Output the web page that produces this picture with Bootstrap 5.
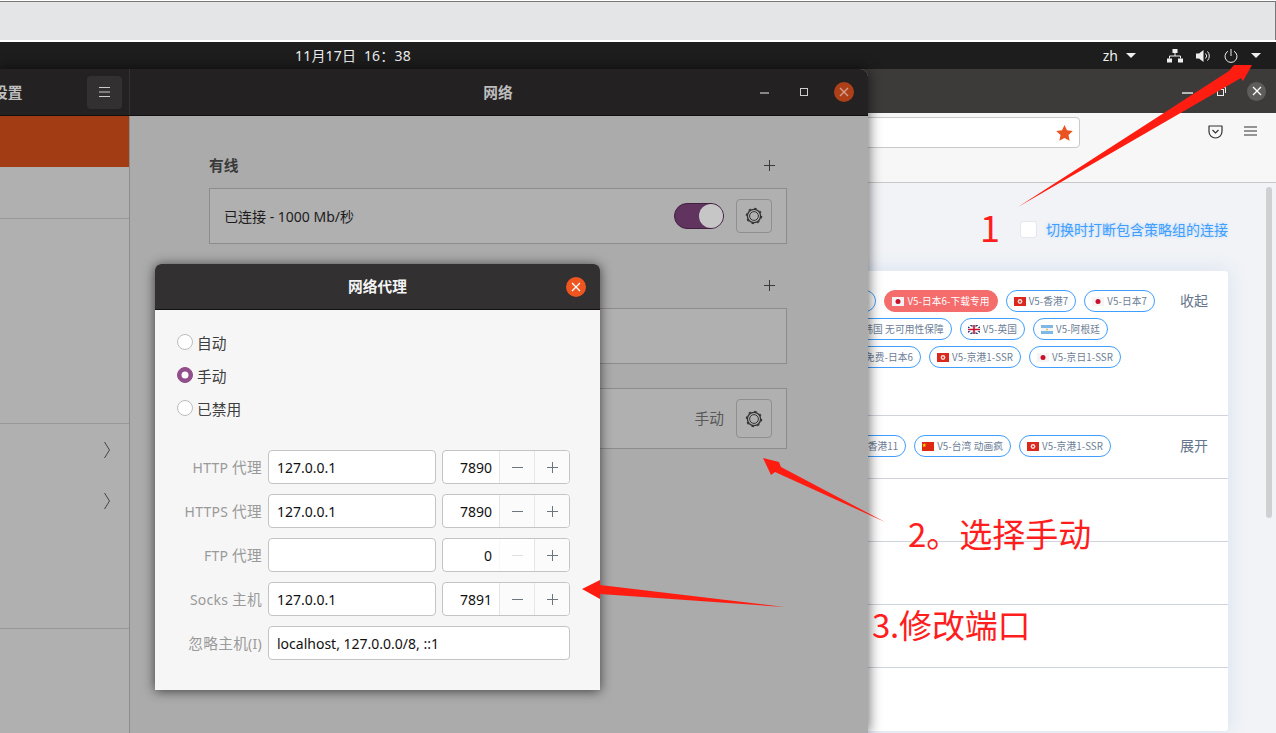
<!DOCTYPE html>
<html lang="zh">
<head>
    <meta charset="UTF-8">
    <meta name="viewport" content="width=device-width, initial-scale=1.0">
    <title>网络代理</title>
    <link rel="stylesheet" href="https://cdn.jsdelivr.net/npm/bootstrap@5.3.0/dist/css/bootstrap.min.css">
    <script src="https://cdn.jsdelivr.net/npm/bootstrap@5.3.0/dist/js/bootstrap.bundle.min.js"></script>
    <style>
        html, body { height: 100%; }
        body { margin: 0; background: #fff; overflow: hidden; font-family: "Noto Sans", "Noto Sans CJK SC", sans-serif; font-size: 14px; }
        .zh { font-size: 14.7px; }
        .desk { position: relative; width: 1276px; height: 733px; overflow: hidden; background: #fff; padding-top: 1px; }

        .top-strip { height: 39px; background: #e4e5e7; border-top: 1px solid #777; border-right: 1px solid #777; margin-bottom: 2px; }
        .top-bar { height: 27px; background: #1d1d1d; color: #eee; }
        .clock { margin-left: 295px; letter-spacing: .2px; white-space: pre; }
        .lang { margin-right: 31px; }
        .lang-caret { width: 0; height: 0; border-left: 5px solid transparent; border-right: 5px solid transparent; border-top: 5px solid #eee; }
        .tray { gap: 13px; margin-right: 15px; }

        /* settings window */
        .win-settings { position: absolute; left: 0; top: 69px; width: 868px; height: 664px; border-top-right-radius: 8px; background: #ababab; box-shadow: 0 0 14px rgba(0, 0, 0, .65); z-index: 2; }
        .set-head { height: 47px; background: #232121; border-top-right-radius: 8px; border-bottom: 1px solid #111; color: #bdbdbd; font-weight: 700; }
        .head-left { width: 130px; border-right: 1px solid #343232; overflow: hidden; padding-right: 7px; }
        .head-left-title { margin-left: -7px; white-space: nowrap; font-size: 14.7px; }
        .menu-btn { width: 35px; height: 33px; background: #323030; border-radius: 4px; margin-left: auto; }
        .head-title { margin-left: 353px; width: 30px; text-align: center; font-size: 14.7px; white-space: nowrap; }
        .win-ctl { margin-left: auto; margin-right: 14px; gap: 20px; }
        .win-ctl > span { width: 20px; height: 20px; }
        .ctl-close { background: #ad4018; border-radius: 50%; }
        .side { width: 130px; height: 617px; background: #b0b0b0; border-right: 1px solid #8c8c8c; }
        .side-on { height: 51px; background: #a23c14; }
        .side-a { height: 52px; border-bottom: 1px solid #999; }
        .side-b { height: 205px; border-bottom: 1px solid #999; padding-top: 0; }
        .chev { height: 51px; padding-right: 19px; }
        .pane { width: 738px; padding: 37px 0 0 79px; color: #1c1c1c; }
        .sec-head { width: 578px; height: 24px; margin-bottom: 11px; font-weight: 700; color: #3a3a3a; }
        .sec-plus { margin-right: 12px; }
        .sec-box { width: 578px; height: 56px; background: #b0b0b0; border: 1px solid #8c8c8c; padding: 0 14px; margin-bottom: 29px; }
        .sec-box.tall { height: 61px; margin-top: -5px; color: #585858; }
        .toggle { position: relative; width: 50px; height: 26px; border-radius: 13px; background: #60345f; border: 1px solid #3f2040; margin-right: 12px; }
        .toggle-knob { position: absolute; right: 0; top: 0; width: 24px; height: 24px; border-radius: 50%; background: #c6c6c6; }
        .gear-btn { width: 36px; height: 34px; border: 1px solid #8f8f8f; border-radius: 4px; background: #b0b0b0; }
        .tall .gear-btn { height: 39px; margin-left: 12px; }

        /* proxy dialog */
        .dlg { position: absolute; left: 155px; top: 264px; width: 445px; height: 426px; border-radius: 6px 6px 0 0; background: #f6f6f6; box-shadow: 0 1px 12px rgba(0, 0, 0, .65); z-index: 3; }
        .dlg-head { height: 46px; background: #323030; border-radius: 6px 6px 0 0; border-bottom: 1px solid #111; color: #f4f4f4; font-weight: 700; position: relative; }
        .dlg-close { position: absolute; right: 14px; top: 13px; width: 20px; height: 20px; background: #ee5520; border-radius: 50%; }
        .dlg-body { padding: 17px 30px 0 22px; color: #3d3d3d; }
        .radio-row { height: 33px; gap: 4px; margin: 0; }
        .radio-row .form-check-input { width: 16px; height: 16px; margin: 0 0 4px; background-color: #fff; border: 1px solid #bdbdbd; box-shadow: none; }
        .radio-row .form-check-input:checked { background-color: #924d8b; border-color: #924d8b; }
        .proxy-grid { display: grid; grid-template-columns: 85px 168px 128px; gap: 10px 6px; margin-top: 24px; align-items: center; }
        .proxy-label { text-align: right; color: #9a9a9a; white-space: nowrap; letter-spacing: .25px; }
        .proxy-input { height: 34px; padding: 0 8px; font-size: 14px; color: #111; border: 1px solid #c4c4c4; border-radius: 4px; box-shadow: none; background: #fff; }
        .proxy-span { grid-column: 2 / 4; }
        .spin { height: 34px; border: 1px solid #c4c4c4; border-radius: 4px; background: #fff; overflow: hidden; color: #111; }
        .spin-num { width: 56px; text-align: right; padding-right: 7px; }
        .spin-btn { flex: 1; border-left: 1px solid #e6e6e6; background: #fbfbfb; height: 100%; }

        /* browser */
        .win-browser { position: absolute; left: 500px; top: 69px; width: 776px; height: 664px; background: #f1f3f6; z-index: 1; }
        .br-title { height: 44px; background: #3d3b39; }
        .br-ctl { width: 100%; height: 100%; padding-right: 10px; gap: 24px; }
        .br-close { width: 19px; height: 19px; border-radius: 50%; background: #5f5d5b; margin-left: -3px; }
        .br-tools { height: 70px; background: #f7f7f8; border-bottom: 1px solid #c8c8c8; padding: 4px 17px 0 0; }
        .url-bar { width: 580px; height: 31px; background: #fff; border: 1px solid #c9c9c9; border-radius: 4px; padding-right: 6px; margin-right: 128px; }
        .pocket { margin-right: 21px; }
        .br-main { position: relative; padding: 37px 48px 0 0; }
        .scroll-thumb { position: absolute; right: 4px; top: 4px; width: 6px; height: 331px; border-radius: 3px; background: #d0d0d0; }
        .opt-line { gap: 9px; height: 18px; margin-bottom: 33px; color: #409eff; text-shadow: 0 0 3px rgba(64, 158, 255, .35); white-space: nowrap; }
        .opt-check { width: 17px; height: 17px; background: #fff; border: 1px solid #e4e7ed; border-radius: 3px; }
        .node-card { width: 728px; border: 0; border-radius: 4px; box-shadow: 0 0 20px rgba(90, 140, 230, .16); }
        .node-row { background: #fff; border-color: #d0d3da; padding: 0; height: 63px; }
        .node-row.first { height: 145px; }
        .node-inner { padding: 19px 20px 0 0; color: #65758c; }
        .tag-col { gap: 6px; flex: 1; min-width: 0; }
        .tag-line { gap: 8px; justify-content: flex-end; }
        .end-47 { padding-right: 47px; }
        .end-34 { padding-right: 34px; }
        .end-44 { padding-right: 44px; }
        .tag { height: 22px; padding: 0 7px; border: 1px solid #409eff; border-radius: 11px; background: #fff; color: #6b7d96; font-family: "Noto Sans CJK SC", sans-serif; font-size: 9.7px; letter-spacing: .1px; gap: 3px; white-space: nowrap; }
        .tag.on { background: #f56c6c; border-color: #f56c6c; color: #fff; }
        .flag { width: 12px; height: 9px; flex: none; }
        .act { width: 28px; margin-left: 25px; line-height: 22px; font-size: 14px; white-space: nowrap; }

        /* annotations */
        .notes { position: absolute; left: 0; top: 0; z-index: 4; pointer-events: none; }
        .note { position: absolute; z-index: 5; color: #ff1d1d; font-family: "Noto Sans CJK SC", sans-serif; font-weight: 400; font-size: 33px; line-height: 1; white-space: nowrap; }
        .note-1 { left: 980px; top: 208px; font-size: 36px; }
        .note-2 { left: 908px; top: 517px; }
        .note-3 { left: 872px; top: 608px; letter-spacing: -.2px; }
    </style>
</head>
<body>
<svg width="0" height="0" class="position-absolute">
    <symbol id="gear" viewBox="0 0 18 18">
        <circle cx="9" cy="9" r="6.6" fill="none" stroke="#333" stroke-width="1.3"/>
        <circle cx="9" cy="9" r="4.4" fill="none" stroke="#333" stroke-width="1"/>
        <circle cx="9" cy="9" r="7.6" fill="none" stroke="#333" stroke-width="1.3" stroke-dasharray="2.4 3.57"/>
    </symbol>
    <symbol id="plus" viewBox="0 0 11 11"><path d="M5.5 0v11M0 5.5h11" stroke="currentColor" fill="none"/></symbol>
    <symbol id="minus" viewBox="0 0 11 11"><path d="M0 5.5h11" stroke="currentColor" fill="none"/></symbol>
    <symbol id="cross" viewBox="0 0 10 10"><path d="M1 1l8 8M9 1l-8 8" stroke="currentColor" stroke-width="1.3" fill="none"/></symbol>
    <symbol id="jp" viewBox="0 0 12 9"><rect width="12" height="9" fill="#f4f4f4"/><circle cx="6" cy="4.5" r="2.5" fill="#c8102e"/></symbol>
    <symbol id="hk" viewBox="0 0 12 9"><rect width="12" height="9" fill="#d9281e"/><circle cx="6" cy="4.5" r="2.4" fill="#f7dcd8"/><circle cx="6" cy="4.5" r="1" fill="#d9281e"/></symbol>
    <symbol id="cn" viewBox="0 0 12 9"><rect width="12" height="9" fill="#de2910"/><path d="M2.8 1.2l.7 1.9 2 .1-1.6 1.2.6 2-1.7-1.1-1.7 1.1.6-2L.1 3.2l2-.1z" fill="#ffde00" transform="scale(.8)"/></symbol>
    <symbol id="uk" viewBox="0 0 12 9"><rect width="12" height="9" fill="#27407f"/><path d="M0 0l12 9M12 0L0 9" stroke="#fff" stroke-width="1.8"/><path d="M6 0v9M0 4.5h12" stroke="#fff" stroke-width="3"/><path d="M6 0v9M0 4.5h12" stroke="#c8102e" stroke-width="1.6"/></symbol>
    <symbol id="ar" viewBox="0 0 12 9"><rect width="12" height="9" fill="#7db8e6"/><rect y="3" width="12" height="3" fill="#f5f5f5"/><circle cx="6" cy="4.5" r=".9" fill="#e6b93c"/></symbol>
</svg>

<div class="desk">
    <div class="top-strip"></div>
    <div class="top-bar d-flex align-items-center">
        <span class="clock">11月17日  16：38</span>
        <div class="lang d-flex align-items-center gap-2 ms-auto"><span>zh</span><span class="lang-caret"></span></div>
        <div class="tray d-flex align-items-center">
            <svg width="16" height="14" viewBox="0 0 16 14" fill="#eee"><rect x="5.5" y="0" width="5" height="4"/><rect x="0" y="9.5" width="5" height="4"/><rect x="11" y="9.5" width="5" height="4"/><path d="M8 4v3M2.5 9.5V7h11v2.5" fill="none" stroke="#eee"/></svg>
            <svg width="15" height="14" viewBox="0 0 15 14" fill="#eee"><path d="M0 4.5h3L7.5 1v12L3 9.5H0z"/><path d="M9.5 4.5a3.5 3.5 0 0 1 0 5M11.5 2.5a6.5 6.5 0 0 1 0 9" fill="none" stroke="#eee"/></svg>
            <svg width="14" height="14" viewBox="0 0 14 14" fill="none" stroke="#eee"><path d="M4 2.2a6 6 0 1 0 6 0M7 0v7"/></svg>
            <span class="lang-caret"></span>
        </div>
    </div>

    <div class="win-browser">
        <div class="br-title">
            <div class="br-ctl d-flex align-items-center justify-content-end">
                <svg class="mt-1" width="11" height="2" viewBox="0 0 11 2"><path d="M0 1h11" stroke="#eee" stroke-width="1.4"/></svg>
                <svg width="9" height="9" viewBox="0 0 9 9" fill="none" stroke="#eee"><rect x=".5" y="2.5" width="6" height="6"/><path d="M3 .5h5.500v5.500"/></svg>
                <span class="br-close d-flex align-items-center justify-content-center text-white"><svg width="10" height="10"><use href="#cross"/></svg></span>
            </div>
        </div>
        <div class="br-tools d-flex align-items-start">
            <div class="url-bar d-flex align-items-center justify-content-end">
                <svg width="17" height="16" viewBox="0 0 17 16"><path d="M8.500 0l2.500 5.300 5.800.700-4.300 4 1.100 5.800-5.100-2.900-5.100 2.900 1.100-5.800L.2 6l5.800-.7z" fill="#e95420"/></svg>
            </div>
            <svg class="pocket mt-2" width="15" height="14" viewBox="0 0 15 14" fill="none" stroke="#333" stroke-width="1.200"><path d="M1 1h13v5.500a6.500 6.500 0 0 1-13 0z" stroke-linejoin="round"/><path d="M4.500 5l3 3 3-3"/></svg>
            <svg class="mt-2" width="13" height="12" viewBox="0 0 13 12" stroke="#333" stroke-width="1.200"><path d="M0 2h13M0 6h13M0 10h13"/></svg>
        </div>
        <div class="br-main">
            <div class="scroll-thumb"></div>
            <div class="opt-line d-flex align-items-center justify-content-end">
                <span class="opt-check"></span><span>切换时打断包含策略组的连接</span>
            </div>
            <div class="card node-card list-group list-group-flush">
                <div class="list-group-item node-row first">
                    <div class="node-inner d-flex">
                        <div class="tag-col d-flex flex-column">
                            <div class="tag-line d-flex">
                                <span class="tag d-flex align-items-center"><svg class="flag"><use href="#jp"/></svg>V5-日本5</span>
                                <span class="tag on d-flex align-items-center"><svg class="flag"><use href="#jp"/></svg>V5-日本6-下载专用</span>
                                <span class="tag d-flex align-items-center"><svg class="flag"><use href="#hk"/></svg>V5-香港7</span>
                                <span class="tag d-flex align-items-center"><svg class="flag"><use href="#jp"/></svg>V5-日本7</span>
                            </div>
                            <div class="tag-line end-47 d-flex">
                                <span class="tag d-flex align-items-center"><svg class="flag"><use href="#uk"/></svg>V5-韩国 无可用性保障</span>
                                <span class="tag d-flex align-items-center"><svg class="flag"><use href="#uk"/></svg>V5-英国</span>
                                <span class="tag d-flex align-items-center"><svg class="flag"><use href="#ar"/></svg>V5-阿根廷</span>
                            </div>
                            <div class="tag-line end-34 d-flex">
                                <span class="tag d-flex align-items-center"><svg class="flag"><use href="#jp"/></svg>V5-免费-日本6</span>
                                <span class="tag d-flex align-items-center"><svg class="flag"><use href="#hk"/></svg>V5-京港1-SSR</span>
                                <span class="tag d-flex align-items-center"><svg class="flag"><use href="#jp"/></svg>V5-京日1-SSR</span>
                            </div>
                        </div>
                        <span class="act">收起</span>
                    </div>
                </div>
                <div class="list-group-item node-row">
                    <div class="node-inner d-flex">
                        <div class="tag-col d-flex flex-column">
                            <div class="tag-line end-44 d-flex">
                                <span class="tag d-flex align-items-center"><svg class="flag"><use href="#hk"/></svg>V5-香港11</span>
                                <span class="tag d-flex align-items-center"><svg class="flag"><use href="#cn"/></svg>V5-台湾 动画疯</span>
                                <span class="tag d-flex align-items-center"><svg class="flag"><use href="#hk"/></svg>V5-京港1-SSR</span>
                            </div>
                        </div>
                        <span class="act">展开</span>
                    </div>
                </div>
                <div class="list-group-item node-row"></div>
                <div class="list-group-item node-row"></div>
                <div class="list-group-item node-row"></div>
                <div class="list-group-item node-row"></div>
            </div>
        </div>
    </div>

    <div class="win-settings">
        <div class="set-head d-flex align-items-center">
            <div class="head-left d-flex align-items-center h-100">
                <span class="head-left-title">设置</span>
                <span class="menu-btn d-flex align-items-center justify-content-center"><svg width="11" height="10" viewBox="0 0 11 10" stroke="#ccc"><path d="M0 .5h11M0 5h11M0 9.500h11"/></svg></span>
            </div>
            <span class="head-title">网络</span>
            <div class="win-ctl d-flex align-items-center">
                <span class="d-flex align-items-end justify-content-center pb-2"><svg width="9" height="2"><path d="M0 1h9" stroke="#ccc" stroke-width="1.200"/></svg></span>
                <span class="d-flex align-items-center justify-content-center"><svg width="8" height="8"><rect x=".5" y=".5" width="7" height="7" fill="none" stroke="#ccc"/></svg></span>
                <span class="ctl-close d-flex align-items-center justify-content-center"><svg width="10" height="10" class="text-white-50"><use href="#cross"/></svg></span>
            </div>
        </div>
        <div class="d-flex">
            <div class="side">
                <div class="side-on"></div>
                <div class="side-a"></div>
                <div class="side-b"></div>
                <div class="side-b">
                    <div class="chev d-flex align-items-center justify-content-end"><svg width="6" height="16" viewBox="0 0 6 16" fill="none" stroke="#444"><path d="M.5 0L5.500 8 .5 16"/></svg></div>
                    <div class="chev d-flex align-items-center justify-content-end"><svg width="6" height="16" viewBox="0 0 6 16" fill="none" stroke="#444"><path d="M.5 0L5.500 8 .5 16"/></svg></div>
                </div>
            </div>
            <div class="pane">
                <div class="sec-head d-flex align-items-center justify-content-between"><span class="zh">有线</span><svg class="sec-plus" width="11" height="11"><use href="#plus"/></svg></div>
                <div class="sec-box d-flex align-items-center">
                    <span class="me-auto">已连接 - 1000 Mb/秒</span>
                    <span class="toggle"><span class="toggle-knob"></span></span>
                    <span class="gear-btn d-flex align-items-center justify-content-center"><svg width="18" height="18"><use href="#gear"/></svg></span>
                </div>
                <div class="sec-head d-flex align-items-center justify-content-end"><svg class="sec-plus" width="11" height="11"><use href="#plus"/></svg></div>
                <div class="sec-box"></div>
                <div class="sec-box tall d-flex align-items-center justify-content-end">
                    <span class="zh">手动</span>
                    <span class="gear-btn d-flex align-items-center justify-content-center"><svg width="18" height="18"><use href="#gear"/></svg></span>
                </div>
            </div>
        </div>
    </div>

    <div class="dlg">
        <div class="dlg-head d-flex align-items-center justify-content-center">
            <span class="zh">网络代理</span>
            <span class="dlg-close d-flex align-items-center justify-content-center text-white"><svg width="10" height="10"><use href="#cross"/></svg></span>
        </div>
        <div class="dlg-body">
            <label class="radio-row d-flex align-items-center"><input class="form-check-input" type="radio" name="mode"><span class="zh">自动</span></label>
            <label class="radio-row d-flex align-items-center"><input class="form-check-input" type="radio" name="mode" checked><span class="zh">手动</span></label>
            <label class="radio-row d-flex align-items-center"><input class="form-check-input" type="radio" name="mode"><span class="zh">已禁用</span></label>
            <div class="proxy-grid">
                <span class="proxy-label">HTTP <span class="zh">代理</span></span>
                <input class="form-control proxy-input" value="127.0.0.1">
                <div class="spin d-flex align-items-center"><span class="spin-num">7890</span><span class="spin-btn d-flex align-items-center justify-content-center text-secondary"><svg width="11" height="11"><use href="#minus"/></svg></span><span class="spin-btn d-flex align-items-center justify-content-center text-secondary"><svg width="11" height="11"><use href="#plus"/></svg></span></div>

                <span class="proxy-label">HTTPS <span class="zh">代理</span></span>
                <input class="form-control proxy-input" value="127.0.0.1">
                <div class="spin d-flex align-items-center"><span class="spin-num">7890</span><span class="spin-btn d-flex align-items-center justify-content-center text-secondary"><svg width="11" height="11"><use href="#minus"/></svg></span><span class="spin-btn d-flex align-items-center justify-content-center text-secondary"><svg width="11" height="11"><use href="#plus"/></svg></span></div>

                <span class="proxy-label">FTP <span class="zh">代理</span></span>
                <input class="form-control proxy-input" value="">
                <div class="spin d-flex align-items-center"><span class="spin-num">0</span><span class="spin-btn d-flex align-items-center justify-content-center text-black-50 opacity-25"><svg width="11" height="11"><use href="#minus"/></svg></span><span class="spin-btn d-flex align-items-center justify-content-center text-secondary"><svg width="11" height="11"><use href="#plus"/></svg></span></div>

                <span class="proxy-label">Socks <span class="zh">主机</span></span>
                <input class="form-control proxy-input" value="127.0.0.1">
                <div class="spin d-flex align-items-center"><span class="spin-num">7891</span><span class="spin-btn d-flex align-items-center justify-content-center text-secondary"><svg width="11" height="11"><use href="#minus"/></svg></span><span class="spin-btn d-flex align-items-center justify-content-center text-secondary"><svg width="11" height="11"><use href="#plus"/></svg></span></div>

                <span class="proxy-label"><span class="zh">忽略主机</span>(I)</span>
                <input class="form-control proxy-input proxy-span" value="localhost, 127.0.0.0/8, ::1">
            </div>
        </div>
    </div>

    <svg class="notes" width="1276" height="733" viewBox="0 0 1276 733" fill="#ff1d12">
        <polygon points="1018,207 1229,71 1234,65 1252,65 1243,81 1241,78"/>
        <polygon points="885,522 781,467 779,462 763,458 771,475 775,472"/>
        <polygon points="784,607 600,585 600,580 582,589 600,599 600,594"/>
    </svg>
    <span class="note note-1">1</span>
    <span class="note note-2">2。选择手动</span>
    <span class="note note-3">3.修改端口</span>
</div>
</body>
</html>
